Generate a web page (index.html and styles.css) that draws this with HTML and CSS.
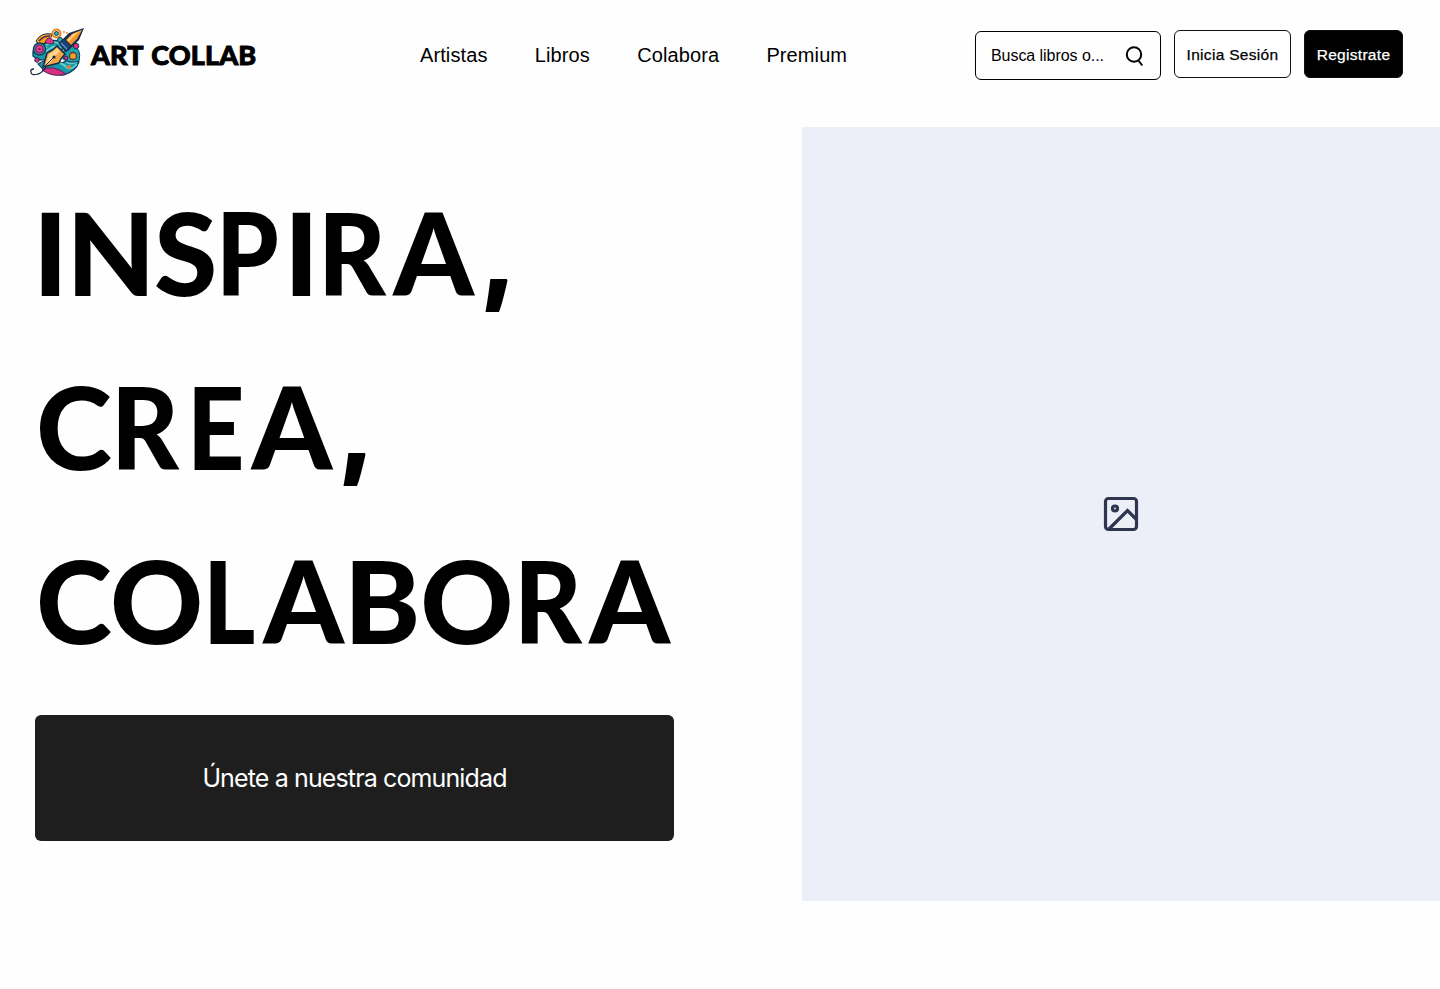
FILE: index.html
```html
<!DOCTYPE html>
<html lang="es">
<head>
<meta charset="utf-8">
<title>Art Collab</title>
<link rel="stylesheet" href="styles.css">
</head>
<body>
<header class="header">
  <a class="brand">
    <svg class="brand-mark" width="56" height="50" viewBox="0 0 56 50">
      <circle cx="27" cy="25" r="22" fill="#fff"/>
      <path d="M6 13Q11 4 22 6Q21 14 9 17Z" fill="#f6a313" stroke="#17324f"/>
      <path d="M9 13Q13 8 20 8" fill="none" stroke="#5a2860" stroke-width="1.4"/>
      <path d="M3 28Q2 14 14 16Q25 8 37 18L20 31Q9 34 3 28Z" fill="#159caa" stroke="#153955" stroke-width="1.2"/>
      <path d="M16 17Q26 11 33 18M19 21Q25 16 31 20M4 19Q9 13 17 20M16 24Q19 19 25 20" fill="none" stroke="#70d2cc" stroke-width="1.5"/>
      <circle cx="9.500" cy="21" r="6" fill="#35aebb" stroke="#153955" stroke-width="1.5"/>
      <circle cx="9.500" cy="21" r="3.800" fill="#ef3c8c" stroke="#811c66" stroke-width="1.3"/>
      <circle cx="9.500" cy="21" r="1.300" fill="#811c66"/>
      <path d="M18 10Q23 10 24 15Q18 17 15 14Z" fill="#e93487" stroke="#532553"/>
      <circle cx="26.500" cy="5.500" r="4" fill="#fff" stroke="#e58a23" stroke-width="2.200"/>
      <circle cx="26.500" cy="5.500" r="2" fill="#35aebb" stroke="#153955"/>
      <circle cx="30" cy="12" r="2.500" fill="#28aeb5" stroke="#153955"/>
      <circle cx="34" cy="4" r="1" fill="#f28d26"/><circle cx="37" cy="5" r="1" fill="#f28d26"/>
      <path d="M8 36Q20 28 32 35Q42 29 49 34Q46 43 34 47Q17 48 8 36Z" fill="#159aa9" stroke="#153955" stroke-width="1.200"/>
      <path d="M14 37Q28 31 37 40Q42 42 47 36M25 34Q32 35 36 38M36 34Q40 37 47 34" fill="none" stroke="#67d2cf" stroke-width="1.500"/>
      <path d="M12 42Q23 36 36 46Q23 50 12 42Z" fill="#d72e83" stroke="#532553"/>
      <path d="M33 31Q32 18 42 16Q52 21 49 33Q41 36 33 31Z" fill="#1aa5ad" stroke="#153955"/>
      <circle cx="43" cy="28" r="3.500" fill="#f0a51e" stroke="#643155" stroke-width="1.300"/>
      <circle cx="46" cy="18" r="2.800" fill="#df317e" stroke="#153955"/>
      <circle cx="36" cy="30" r="2" fill="#dc2b83" stroke="#153955"/>
      <circle cx="7" cy="32" r="2.300" fill="#e92f7c" stroke="#153955"/>
      <circle cx="39" cy="39" r="2" fill="#f07931"/>
      <path d="M32 12L39 5L54 0L49 12L38 23Z" fill="#152d4a"/>
      <path d="M36 12L42 6L52 2L47 11L41 17Z" fill="#f4952c"/>
      <path d="M37 12L43 6L52 2Q44 7 39 14Z" fill="#ffd079"/>
      <path d="M29 15L34 11L41 18L36 24Z" fill="#1f3f78" stroke="#11243c"/>
      <path d="M31 15L37 21" stroke="#5f9ad2" stroke-width="1.200"/>
      <path d="M13 39L17 25Q22 23 27 18L35 26Q31 30 29 35Z" fill="#f3a444" stroke="#152d4a" stroke-width="1.600"/>
      <path d="M15 38L19 26Q24 24 27 20L30 23Q24 28 21 34Z" fill="#ffd78c"/>
      <path d="M15 38L23 30" stroke="#152d4a"/><circle cx="24" cy="29" r="1.600" fill="#152d4a"/>
      <path d="M16 39Q12 45 8 46Q1 48 1 44Q0 41 4 41" fill="none" stroke="#172b4c" stroke-width="1.300"/>
    </svg>
    <span class="brand-name">ART COLLAB</span>
  </a>
  <nav class="nav">
    <a>Artistas</a><a>Libros</a><a>Colabora</a><a>Premium</a>
  </nav>
  <div class="actions">
    <div class="search">
      <span>Busca libros o...</span>
      <svg width="20" height="22" viewBox="0 0 20 22" fill="none" stroke="#000" stroke-width="2"><circle cx="9" cy="9.500" r="7.200"/><path d="M13 15L17.300 20.500"/></svg>
    </div>
    <button class="btn login">Inicia Sesión</button>
    <button class="btn register">Registrate</button>
  </div>
</header>
<main class="hero">
  <section class="copy">
    <h1 class="title"><span class="line line-a">INS<span class="narrow p">P</span>I<span class="narrow r">R</span>A<span class="comma">,</span></span><span class="line line-b">C<span class="narrow r">R</span><span class="narrow e">E</span>A<span class="comma">,</span></span><span class="line line-c">CO<span class="narrow l">L</span>ABO<span class="narrow r">R</span>A</span></h1>
    <button class="cta">Únete a nuestra comunidad</button>
  </section>
  <div class="picture">
    <svg width="36" height="36" viewBox="0 0 36 36" fill="none" stroke="#2d364d" stroke-width="3.200"><rect x="2.500" y="2.500" width="31" height="31" rx="3"/><circle cx="12" cy="12.500" r="2.500"/><path d="M6 33L24.500 14.500L33 23"/></svg>
  </div>
</main>
</body>
</html>
```
FILE: styles.css
```css
* { box-sizing: border-box; }
body { margin: 0; background: #fefefe; color: #000; font-family: "Liberation Sans", Arial, sans-serif; overflow: hidden; }
button { font: inherit; margin: 0; padding: 0; }
.header { display: flex; height: 127.4px; padding: 27px 37px 0 30px; align-items: flex-start; }
.brand { display: flex; width: 390px; gap: 5px; padding-top: 1px; }
.brand-mark { flex: none; }
.brand-name { font: 900 27px/54px Lato, sans-serif; letter-spacing: .1px; word-spacing: 2px; -webkit-text-stroke: .9px #000; white-space: nowrap; }
.nav { display: flex; gap: 47.3px; font-size: 20px; line-height: 56px; letter-spacing: .1px; }
.actions { display: flex; margin-left: auto; gap: 13px; padding-top: 3px; }
.search { display: flex; align-items: center; justify-content: space-between; width: 186px; height: 49px; margin-top: 1px; padding: 0 15px; border: 1.3px solid #000; border-radius: 6px; font-size: 16px; letter-spacing: -.05px; }
.btn { height: 48px; margin-top: .4px; border: 1px solid #111; border-radius: 6px; font-size: 15.5px; letter-spacing: .3px; padding-top: 1px; -webkit-text-stroke: .25px currentColor; }
.login { width: 117px; background: #fff; color: #000; }
.register { width: 99px; background: #000; color: #fff; }
.hero { display: flex; justify-content: space-between; height: 773.2px; }
.copy { padding: 37px 0 0 35px; }
.title { margin: 0; font: 900 115px/174px Lato, sans-serif; }
.line { display: block; height: 174px; white-space: nowrap; }
.line-a { margin-left: -2px; letter-spacing: -1.4px; }
.line-b { margin-left: 1px; letter-spacing: -1px; }
.line-c { margin-left: 1px; letter-spacing: 0; }
.narrow { display: inline-block; transform-origin: left; letter-spacing: 0; }
.p { transform: scaleX(.87); margin-right: -4px; }
.r { transform: scaleX(.91); margin-right: 1px; }
.e { transform: scaleX(.87); margin-right: -1px; }
.l { transform: scaleX(.87); margin-right: 0; }
.comma { font-family: "Open Sans", sans-serif; font-weight: 800; line-height: 0; display: inline-block; transform: scaleX(.86); transform-origin: right; margin-left: 5px; }
.cta { display: block; width: 639px; height: 126.5px; margin-top: 28.4px; border: 0; border-radius: 6px; background: #1e1e1e; color: #fff; font: 400 25px Inter, sans-serif; letter-spacing: -.87px; }
.picture { display: flex; width: 638px; background: #eceff8; align-items: center; justify-content: center; }
```
